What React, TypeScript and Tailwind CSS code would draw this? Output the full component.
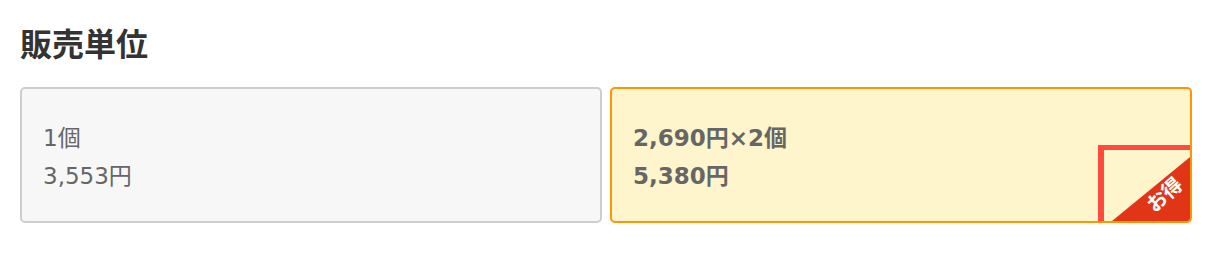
const font = { fontFamily: '"DejaVu Sans", "Noto Sans CJK JP", sans-serif' };
const titleFont = { fontFamily: '"Noto Sans CJK JP", sans-serif' };

const DealBadge = () => (
  <div className="absolute right-0 bottom-0 h-[76px] w-[92px] border-l-[6px] border-t-[5px] border-[#ff4a3d]">
    <svg className="absolute right-0 bottom-0" width="78" height="64" viewBox="0 0 78 64">
      <polygon points="78,0 78,64 0,64" fill="#e03617" />
    </svg>
    <span
      className="absolute right-[6px] bottom-[17px] rotate-[-42deg] text-[20px] font-bold leading-none text-white"
      style={titleFont}
    >
      お得
    </span>
  </div>
);

export default function App() {
  return (
    <div className="bg-white px-5 pt-[19px] pb-[30px]" style={font}>
      <h2 className="text-[32px] font-bold leading-[46px] text-[#333]" style={titleFont}>
        販売単位
      </h2>
      <div className="mt-[22px] grid grid-cols-2 gap-2">
        <button className="flex h-[136px] flex-col items-start justify-center rounded-[5px] border-2 border-[#cdcdcd] bg-[#f7f7f7] px-[21px] pt-[3px] text-left text-[23px] leading-[38px] text-[#666]">
          <span>1個</span>
          <span>3,553円</span>
        </button>
        <button className="relative flex h-[136px] flex-col items-start justify-center overflow-hidden rounded-[5px] border-2 border-[#ff9500] bg-[#fff5cc] px-[21px] pt-[3px] text-left text-[23px] font-bold leading-[38px] text-[#666]">
          <span>2,690円×2個</span>
          <span>5,380円</span>
          <DealBadge />
        </button>
      </div>
    </div>
  );
}
